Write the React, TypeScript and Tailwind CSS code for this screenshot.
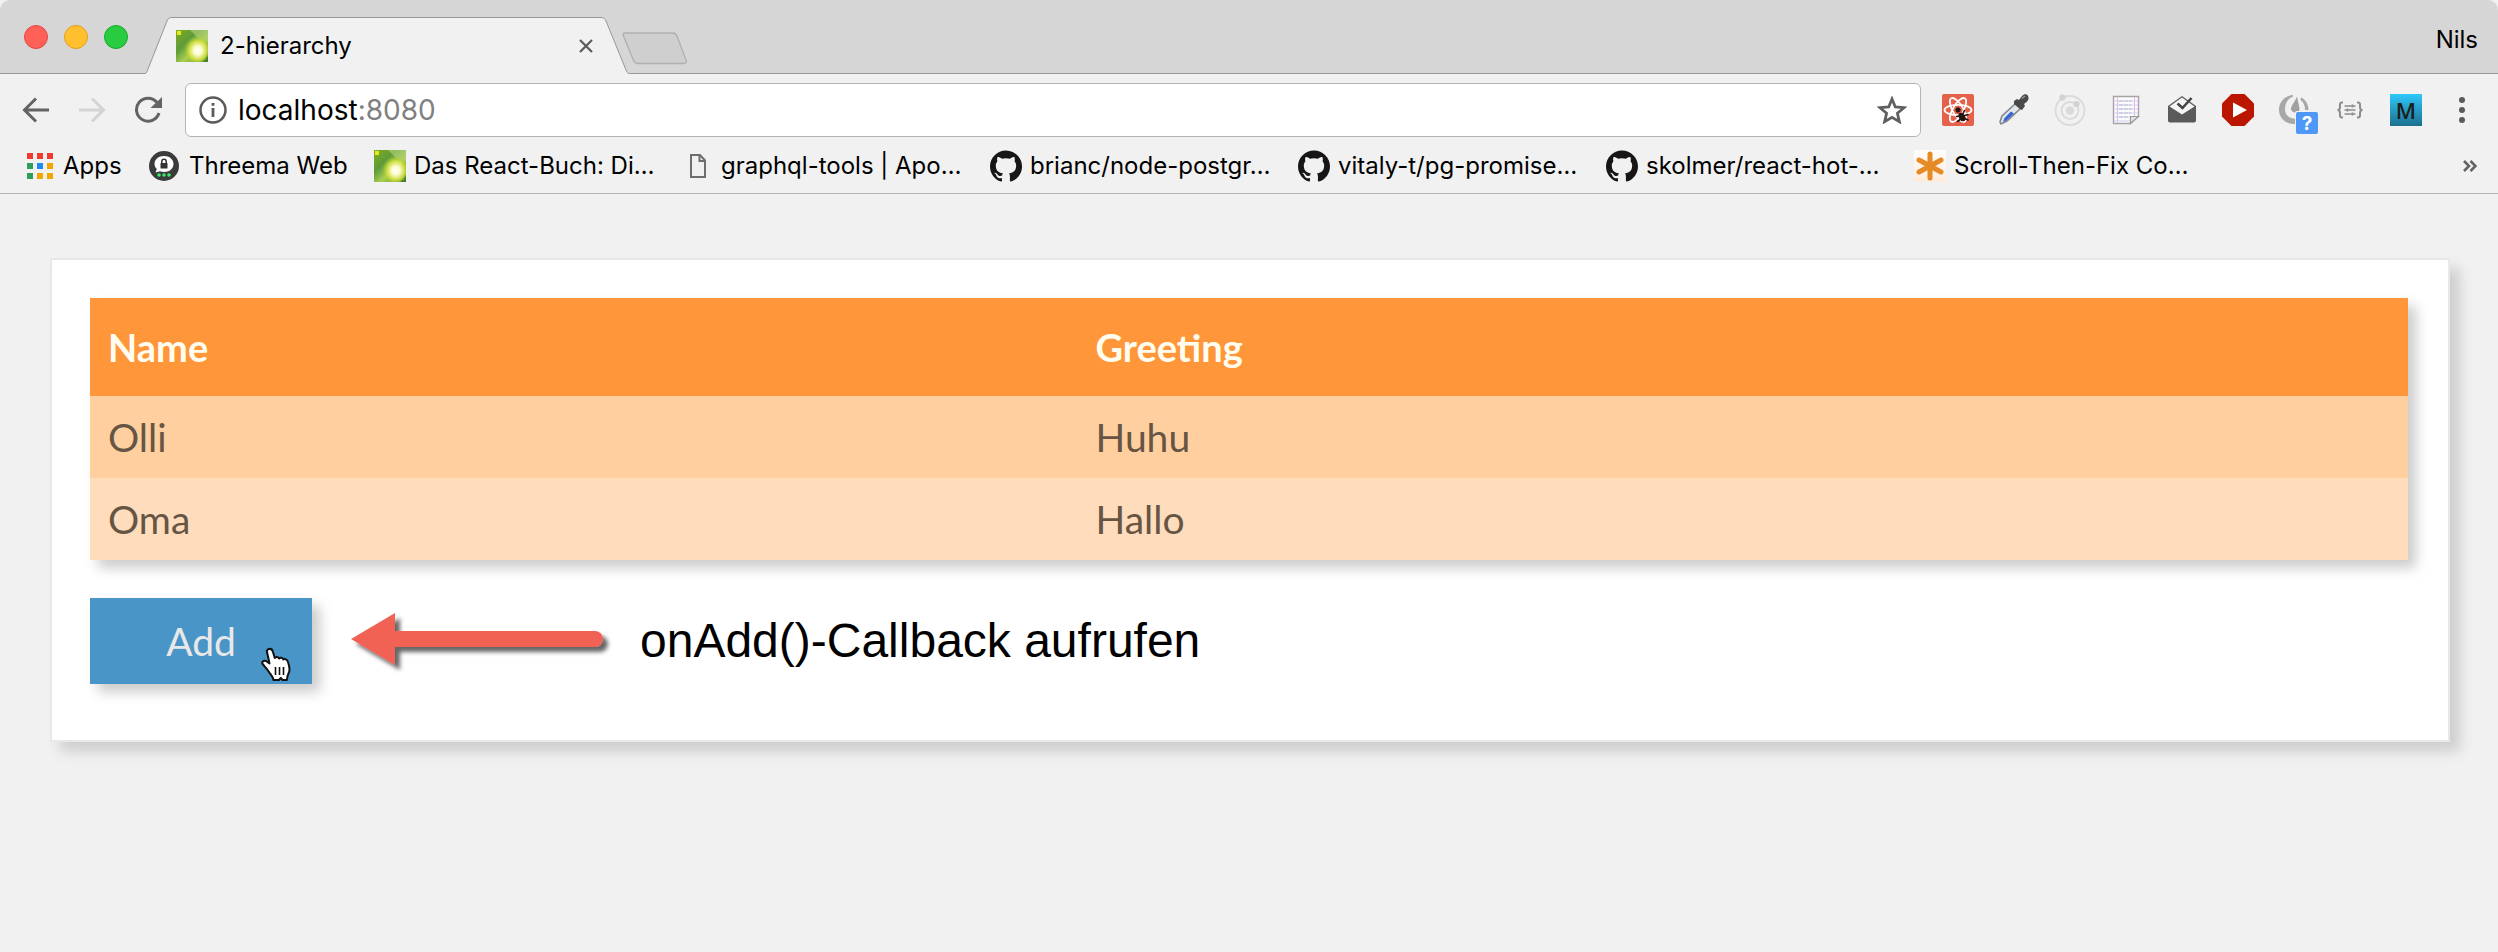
import React, { useState } from "react";
import { SiGithub } from "react-icons/si";

function LeafIcon() {
  return (
    <svg viewBox="0 0 32 32" className="size-8 shrink-0" aria-hidden="true">
      <defs>
        <linearGradient id="leaf" x1="0" y1="0" x2="1" y2="1">
          <stop offset="0" stopColor="#7fae1c" />
          <stop offset=".35" stopColor="#5f9a3a" />
          <stop offset=".6" stopColor="#a9cf52" />
          <stop offset="1" stopColor="#3f7a22" />
        </linearGradient>
        <radialGradient id="glow" cx=".6" cy=".55" r=".5">
          <stop offset="0" stopColor="#ffffff" />
          <stop offset=".3" stopColor="#fbfccb" />
          <stop offset=".65" stopColor="#d6e23c" stopOpacity=".85" />
          <stop offset="1" stopColor="#9cc52d" stopOpacity="0" />
        </radialGradient>
      </defs>
      <rect width="32" height="32" fill="url(#leaf)" />
      <path d="M14 0h18v12L22 8z" fill="#b5d27c" opacity=".6" />
      <ellipse cx="19" cy="19" rx="14" ry="15" fill="url(#glow)" />
      <rect x="1" y="1" width="4" height="4" fill="#e6e81c" />
    </svg>
  );
}

function AppsIcon() {
  const colors = ["#f03a2e", "#f03a2e", "#f03a2e", "#2f9e5b", "#1e88f5", "#f2a600", "#2f9e5b", "#f2a600", "#f2a600"];
  return (
    <svg viewBox="0 0 26 26" className="size-[26px] shrink-0" aria-hidden="true">
      {colors.map((c, i) => (
        <rect key={i} x={(i % 3) * 10} y={Math.floor(i / 3) * 10} width="6" height="6" fill={c} />
      ))}
    </svg>
  );
}

function ThreemaIcon() {
  return (
    <svg viewBox="0 0 30 30" className="size-[30px] shrink-0" aria-hidden="true">
      <circle cx="15" cy="15" r="15" fill="#3b3b3b" />
      <path d="M15 5c5.500 0 9.500 3.500 9.500 8s-4 8-9.500 8c-1.500 0-2.800-.2-4-.7L6.500 21.500l1.300-3.600C6.300 16.500 5.500 14.900 5.500 13c0-4.500 4-8 9.500-8z" fill="#fff" />
      <rect x="11.500" y="12" width="7" height="5.500" rx=".6" fill="#333" />
      <path d="M12.800 12.500v-2a2.200 2.200 0 0 1 4.400 0v2" fill="none" stroke="#333" strokeWidth="1.500" />
      <circle cx="10" cy="24" r="1.800" fill="#3fe669" />
      <circle cx="15" cy="24" r="1.800" fill="#3fe669" />
      <circle cx="20" cy="24" r="1.800" fill="#3fe669" />
    </svg>
  );
}

function PageIcon() {
  return (
    <svg viewBox="0 0 18 24" className="h-6 w-[18px] shrink-0" fill="none" stroke="#6e6e6e" strokeWidth="2" aria-hidden="true">
      <path d="M2 1h9l5 5.500V23H2z" />
      <path d="M10.500 1.500V7H16" />
    </svg>
  );
}

function AsteriskIcon() {
  return (
    <svg viewBox="0 0 32 32" className="size-8 shrink-0" aria-hidden="true">
      <defs>
        <linearGradient id="peach" x1="0" y1="0" x2="0" y2="1">
          <stop offset="0" stopColor="#fffdfb" />
          <stop offset="1" stopColor="#fdebdc" />
        </linearGradient>
      </defs>
      <rect width="32" height="32" fill="url(#peach)" />
      <g stroke="#e58a24" strokeWidth="5" strokeLinecap="round">
        <path d="M16 4v24M5 10l22 12M27 10L5 22" />
      </g>
    </svg>
  );
}

function ReactDevIcon() {
  return (
    <svg viewBox="0 0 32 32" className="size-8" aria-hidden="true">
      <rect width="32" height="32" rx="2" fill="#e6614a" />
      <g fill="none" stroke="#fff" strokeWidth="1.800">
        <ellipse cx="16" cy="16" rx="13.500" ry="5.200" />
        <ellipse cx="16" cy="16" rx="13.500" ry="5.200" transform="rotate(60 16 16)" />
        <ellipse cx="16" cy="16" rx="13.500" ry="5.200" transform="rotate(120 16 16)" />
      </g>
      <g fill="#221512" stroke="#221512">
        <circle cx="16" cy="16" r="2.200" />
        <ellipse cx="20" cy="23" rx="2.600" ry="4" transform="rotate(-30 20 23)" />
        <path d="M14.500 22.500l4-.5M15.500 27.500l4-3M22.500 16.500l-2.500 5M26 20.500l-5 1.500M26 26l-4.500-2" strokeWidth="1.600" strokeLinecap="round" />
      </g>
    </svg>
  );
}

function DropperIcon() {
  return (
    <svg viewBox="0 0 32 32" className="size-8" aria-hidden="true">
      <path d="M17.500 9.500l5 5L9 27l-6 3-1-2 2-6z" fill="#e3e6ea" stroke="#85898e" strokeWidth="1.600" />
      <path d="M13 17.500l3 2-7.500 7-3.500 1.500 1.500-4z" fill="#3465d8" />
      <path d="M16 7l3-2 2 1 3-4c3-3 7-2 6.500 3-.5 2-3 4-4.500 5l1 2-3 4-2-1-6-5z" fill="#4a4a4a" />
      <path d="M24.500 4l2-1.500" stroke="#999" strokeWidth="1.500" strokeLinecap="round" />
    </svg>
  );
}

function OrbitIcon() {
  return (
    <svg viewBox="0 0 32 32" className="size-8" aria-hidden="true">
      <g fill="none" stroke="#dadada" strokeWidth="1.800">
        <circle cx="16" cy="16.500" r="14.500" />
        <circle cx="16" cy="16.500" r="8.500" />
      </g>
      <circle cx="16" cy="16.500" r="4.200" fill="#dadada" />
      <circle cx="8.500" cy="3.500" r="3.100" fill="#d2d2d2" />
      <circle cx="22.500" cy="10" r="3.100" fill="#d2d2d2" />
    </svg>
  );
}

function NoteIcon() {
  return (
    <svg viewBox="0 0 32 32" className="size-8" aria-hidden="true">
      <path d="M3.500 2.500h25V22l-8 7.500h-17z" fill="#fbfbfe" stroke="#a5a5a5" strokeWidth="1.400" />
      <path d="M7.500 3v26M24.500 3v20" stroke="#f0b5d4" strokeWidth="1" />
      <path d="M4 7h24M4 11h24M4 15h24M4 19h24M4 23h17M4 27h17" stroke="#cfcff2" strokeWidth="1" />
      <path d="M9 7h13M9 11h12M9 15h13M9 19h12M9 23h9" stroke="#b9bdc9" strokeWidth="1.200" strokeDasharray="4 1" />
      <path d="M20.500 29.500V22.500h8z" fill="#e2e2e2" stroke="#9a9a9a" strokeWidth="1.200" />
    </svg>
  );
}

function MailCheckIcon() {
  return (
    <svg viewBox="0 0 32 32" className="size-8" aria-hidden="true">
      <path d="M2 12L16 2l14 10v14.500a2 2 0 0 1-2 2H4a2 2 0 0 1-2-2z" fill="#5a5a5a" />
      <path d="M3.500 12.500L16 3.500l12.500 9L16 20.500z" fill="#f4f4f4" />
      <path d="M11.500 9.500l5 4.500L25.500 4" fill="none" stroke="#444" strokeWidth="2.600" />
    </svg>
  );
}

function StopPlayIcon() {
  return (
    <svg viewBox="0 0 32 32" className="size-8" aria-hidden="true">
      <path d="M9.500 0h13L32 9.500v13L22.500 32h-13L0 22.500v-13z" fill="#bb1600" />
      <path d="M11 8.500L25 16l-14 7.500z" fill="#fff" />
    </svg>
  );
}

function GaugeIcon() {
  return (
    <svg viewBox="0 0 40 40" className="size-10" aria-hidden="true">
      <path d="M15 1C6 2 1 8.500 1 15.500c0 9 7 14.500 14.500 14.500 2 0 4-.4 6-1.200V23c-2 1.300-4 1.800-6 1.600-5-.5-8.500-4-8.500-9C7 9 10 4.500 15 2.500z" fill="#a8a8a8" />
      <path d="M23 3.500c4.500 2 7.500 6.500 7.500 12.500h-3.500c0-4.500-1.500-8-4.500-10z" fill="#a8a8a8" />
      <path d="M19 2.500l2.500 12c.3 2.500-1.500 4-4 4s-5-2-4.500-4.500C14 10 17.500 7 19 2.500z" fill="#a0a0a0" />
      <rect x="17" y="17" width="23" height="23" rx="2" fill="#f1f1f1" />
      <rect x="18" y="18" width="22" height="22" rx="2" fill="#4f98f8" />
      <text x="29" y="36" textAnchor="middle" fontSize="19" fontWeight="700" fill="#fff" className="font-[Inter,sans-serif]">?</text>
    </svg>
  );
}

function BracesIcon() {
  return (
    <svg viewBox="0 0 26 18" className="h-[18px] w-[26px]" fill="none" stroke="#8c8c8c" strokeWidth="2" aria-hidden="true">
      <path d="M6 1.500H5C3.500 1.500 3 2 3 3.500V6c0 2-.8 3-2.500 3C2.200 9 3 10 3 12v2.500c0 1.500.5 2 2 2h1M20 1.500h1c1.500 0 2 .5 2 2V6c0 2 .8 3 2.500 3-1.700 0-2.500 1-2.500 3v2.500c0 1.500-.5 2-2 2h-1" />
      <path d="M7.500 5h11M7.500 9h11M7.500 13h11" strokeWidth="1.400" />
      <path d="M15.500 3.500v3M10.500 7.500v3M15.500 11.500v3" strokeWidth="1.600" />
    </svg>
  );
}

function MIcon() {
  return (
    <span className="flex size-8 items-center justify-center bg-linear-to-b from-[#2fc8fb] to-[#1b7090] font-['Open_Sans',sans-serif] text-[22px] leading-none font-semibold text-[#1d1d1d]">
      M
    </span>
  );
}

function MenuIcon() {
  return (
    <svg viewBox="0 0 6 26" className="h-[26px] w-[6px]" fill="#5a5a5a" aria-hidden="true">
      <circle cx="3" cy="3" r="3" />
      <circle cx="3" cy="13" r="3" />
      <circle cx="3" cy="23" r="3" />
    </svg>
  );
}

const extensions = [
  { label: "React Developer Tools", icon: <ReactDevIcon /> },
  { label: "Color picker", icon: <DropperIcon /> },
  { label: "Orbit", icon: <OrbitIcon /> },
  { label: "Notes", icon: <NoteIcon /> },
  { label: "Mail checker", icon: <MailCheckIcon /> },
  { label: "Video stopper", icon: <StopPlayIcon /> },
  { label: "Page speed", icon: <span className="-mr-2 -mb-2 block"><GaugeIcon /></span> },
  { label: "JSON formatter", icon: <BracesIcon /> },
  { label: "M", icon: <MIcon /> },
  { label: "Menu", icon: <MenuIcon /> },
];

const bookmarks = [
  { text: "Apps", icon: <AppsIcon />, box: "w-[122px] gap-[10px]" },
  { text: "Threema Web", icon: <ThreemaIcon />, box: "w-[225px] gap-[10px]" },
  { text: "Das React-Buch: Di…", icon: <LeafIcon />, box: "w-[315px] gap-2" },
  { text: "graphql-tools | Apo…", icon: <PageIcon />, box: "w-[301px] gap-[14px]" },
  { text: "brianc/node-postgr…", icon: <SiGithub className="size-8 shrink-0 text-[#171515]" />, box: "w-[308px] gap-2" },
  { text: "vitaly-t/pg-promise…", icon: <SiGithub className="size-8 shrink-0 text-[#171515]" />, box: "w-[308px] gap-2" },
  { text: "skolmer/react-hot-…", icon: <SiGithub className="size-8 shrink-0 text-[#171515]" />, box: "w-[308px] gap-2" },
  { text: "Scroll-Then-Fix Co…", icon: <AsteriskIcon />, box: "gap-2" },
];

function TabStrip() {
  return (
    <header className="flex h-[74px] items-end rounded-t-[10px] bg-[#d7d6d6] bg-[linear-gradient(#979797,#979797)] bg-[length:100%_1px] bg-bottom bg-no-repeat">
      <div className="flex h-full w-[145px] shrink-0 items-center gap-4 pl-6">
        <button aria-label="Close window" className="size-6 rounded-full border border-[#e2463f] bg-[#ff6159]" />
        <button aria-label="Minimize window" className="size-6 rounded-full border border-[#e1a116] bg-[#ffbf2f]" />
        <button aria-label="Zoom window" className="size-6 rounded-full border border-[#12ac28] bg-[#29cc41]" />
      </div>
      <div className="relative flex h-[57px] w-[485px] shrink-0 items-center pr-9 pl-[31px]">
        <svg viewBox="0 0 485 57" className="absolute inset-0 size-full" aria-hidden="true">
          <path d="M0 56.500C2 56 2 54 3 52L22 4C23.500 1 24.500.5 27 .5H456C459 .5 459.500 1.500 461 4L481 53C482 55.500 482.500 56.500 485 56.500V57H0z" fill="#f1f1f1" />
          <path d="M0 56.500C2 56 2 54 3 52L22 4C23.500 1 24.500.5 27 .5H456C459 .5 459.500 1.500 461 4L481 53C482 55.500 482.500 56.500 485 56.500" fill="none" stroke="#979797" />
        </svg>
        <span className="relative flex w-full items-center gap-3">
          <LeafIcon />
          <span className="flex-1 text-2xl text-black">2-hierarchy</span>
          <button aria-label="Close tab" className="p-px">
            <svg viewBox="0 0 14 14" className="size-[14px]" stroke="#5a5a5a" strokeWidth="2.200" aria-hidden="true">
              <path d="M1 1l12 12M13 1L1 13" />
            </svg>
          </button>
        </span>
      </div>
      <button aria-label="New tab" className="-ml-2 mb-[9px]">
        <svg viewBox="0 0 66 33" className="h-[33px] w-[66px]" aria-hidden="true">
          <path d="M3 1h48c2 0 3 .5 4 3l9 24c1 2.500 0 3.500-2 3.500H16c-2 0-3.500-1-4.500-3L1.500 4C1 2 1 1 3 1z" fill="#cfcfcf" stroke="#b0b0b0" strokeWidth="1.300" />
        </svg>
      </button>
      <span className="mb-[18px] ml-auto pr-5 text-2xl text-black">Nils</span>
    </header>
  );
}

function Toolbar() {
  return (
    <div className="flex h-[74px] items-center bg-[#f1f1f1] pb-[2px] pl-[22px]">
      <button aria-label="Back" className="w-14">
        <svg viewBox="0 0 28 26" className="h-[26px] w-7" fill="none" stroke="#636363" strokeWidth="3" aria-hidden="true">
          <path d="M27 13H3M14 1.500L2.500 13 14 24.500" />
        </svg>
      </button>
      <button aria-label="Forward" disabled className="w-14">
        <svg viewBox="0 0 28 26" className="h-[26px] w-7" fill="none" stroke="#d4d4d4" strokeWidth="3" aria-hidden="true">
          <path d="M1 13h24M14 1.500L25.500 13 14 24.500" />
        </svg>
      </button>
      <button aria-label="Reload" className="w-[51px]">
        <svg viewBox="0 0 28 28" className="size-7" aria-hidden="true">
          <path d="M23 6.500A11.500 11.500 0 1 0 25 17" fill="none" stroke="#636363" strokeWidth="3" />
          <path d="M28 1v11H16.500z" fill="#636363" />
        </svg>
      </button>
      <div className="relative flex h-[54px] flex-1 items-center rounded-md border border-[#b4b4b4] bg-white px-[13px]">
        <svg viewBox="0 0 28 28" className="mr-[11px] size-7" aria-hidden="true">
          <circle cx="14" cy="14" r="12.500" fill="none" stroke="#5a5a5a" strokeWidth="2.500" />
          <path d="M12.600 12h2.800v9h-2.800zM12.600 7h2.800v2.800h-2.800z" fill="#5a5a5a" />
        </svg>
        <a href="http://localhost:8080" className="flex-1 text-[28px] leading-8 text-black">
          localhost<span className="text-[#808080]">:8080</span>
        </a>
        <button aria-label="Bookmark this page">
          <svg viewBox="0 0 30 28" className="h-7 w-[30px]" fill="none" stroke="#606060" strokeWidth="2.800" aria-hidden="true">
            <path d="M15 3l3.300 8 8.700.7-6.600 5.600 2 8.400L15 21.300l-7.400 4.400 2-8.400L3 11.700l8.700-.7z" />
          </svg>
        </button>
      </div>
      <div className="flex items-center pl-[9px] pr-2">
        {extensions.map((e) => (
          <button key={e.label} aria-label={e.label} className="flex h-8 w-14 items-center justify-center">
            {e.icon}
          </button>
        ))}
      </div>
    </div>
  );
}

function BookmarkBar() {
  return (
    <nav className="flex h-[46px] items-center border-b border-[#b4b4b4] bg-[#f1f1f1] pr-[21px] pb-[10px] pl-[27px]">
      {bookmarks.map((b) => (
        <a key={b.text} href="#" className={"flex shrink-0 items-center text-2xl whitespace-nowrap text-black " + b.box}>
          {b.icon}
          {b.text}
        </a>
      ))}
      <button aria-label="More bookmarks" className="ml-auto">
        <svg viewBox="0 0 14 12" className="h-3 w-[14px]" fill="none" stroke="#636363" strokeWidth="2.600" aria-hidden="true">
          <path d="M1 1l5 5-5 5M7.500 1l5 5-5 5" />
        </svg>
      </button>
    </nav>
  );
}

function HandCursor() {
  return (
    <svg viewBox="-1 0 31 36" className="absolute top-[49px] left-[170px] h-9 w-[31px]" aria-hidden="true">
      <path
        d="M8 2c2-.5 3.300.7 3.800 2.500l2 6.500c.8-1.500 3.700-1.200 4.200.5 1.200-1.300 3.800-.9 4.300 1 1.500-1 4 0 4.600 2.200 1 3 2.300 6.500 1.300 10-.5 1.800-2 3-2.300 8.300h-4.400l-1.700-2-1.800 2H12.500c-.5-3.500-3-5.500-4.500-8-1.500-2.600-3.500-4.600-6-7.500-2-2.200.5-4.500 3-3.500l3.500 2.500L6 5c-.5-1.500.5-2.700 2-3z"
        fill="#fff"
        stroke="#111"
        strokeWidth="2"
        strokeLinejoin="round"
      />
      <path d="M14.500 20v8M18.500 20v8M22.500 20v8" stroke="#111" strokeWidth="1.600" />
    </svg>
  );
}

export default function App() {
  const [rows] = useState([
    { name: "Olli", greeting: "Huhu" },
    { name: "Oma", greeting: "Hallo" },
  ]);
  return (
    <div className="min-h-screen bg-[#f1f1f1] font-[Inter,sans-serif]">
      <TabStrip />
      <Toolbar />
      <BookmarkBar />
      <main className="mt-16 mr-12 ml-[50px] border-2 border-[#e8e8e8] bg-white pt-[38px] pr-10 pb-14 pl-[38px] font-[Lato,sans-serif] shadow-[10px_10px_12px_#cfcfcf]">
        <table className="w-full table-fixed border-collapse text-left text-[39px] leading-[50px] text-[#665544] shadow-[8px_8px_12px_#cccccc]">
          <thead className="bg-[#ff9639] text-[38px] text-[#fffdf0]">
            <tr className="h-[98px]">
              <th className="w-[42.6%] px-[18px] font-bold">Name</th>
              <th className="px-[18px] font-bold">Greeting</th>
            </tr>
          </thead>
          <tbody>
            {rows.map((r) => (
              <tr key={r.name} className="h-[82px] odd:bg-[#ffcfa0] even:bg-[#ffdcbc]">
                <td className="px-[18px]">{r.name}</td>
                <td className="px-[18px]">{r.greeting}</td>
              </tr>
            ))}
          </tbody>
        </table>
        <div className="mt-[38px] flex items-center">
          <button className="relative h-[86px] w-[222px] bg-[#4a95c8] text-[39px] text-[#e8e8e8] shadow-[8px_8px_12px_#cccccc]">
            Add
            <HandCursor />
          </button>
          <svg viewBox="0 0 262 64" className="ml-[39px] h-16 w-[262px]" aria-hidden="true">
            <defs>
              <filter id="drop" x="-10%" y="-30%" width="120%" height="170%">
                <feDropShadow dx="5" dy="5" stdDeviation="2" floodColor="#000" floodOpacity=".6" />
              </filter>
            </defs>
            <path d="M0 30L44 4v18h200a8 8 0 0 1 0 16H44v18z" fill="#f16255" filter="url(#drop)" />
          </svg>
          <span className="ml-[27px] font-['Liberation_Sans',sans-serif] text-5xl text-black">onAdd()-Callback aufrufen</span>
        </div>
      </main>
    </div>
  );
}
